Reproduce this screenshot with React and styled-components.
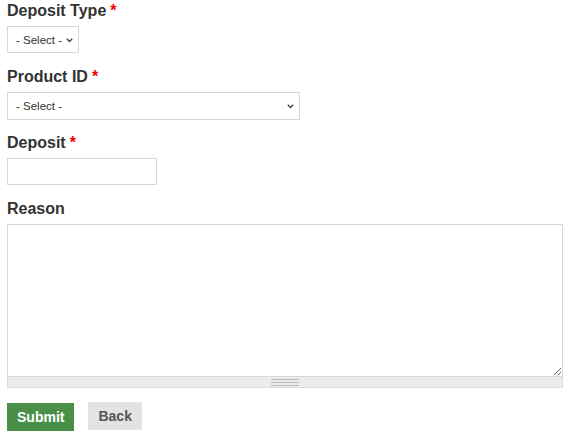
import React from "react";
import styled, { createGlobalStyle } from "styled-components";

const GlobalStyle = createGlobalStyle`
  body {
    margin: 0;
    background: #fff;
    font-family: "Liberation Sans", Arial, sans-serif;
    color: #333;
  }
`;

const Form = styled.form`
  padding: 1px 7px 0;
`;

const Field = styled.div`
  margin-bottom: ${(p) => p.$spacing ?? 14}px;
`;

const Label = styled.label`
  display: block;
  font-size: 16px;
  font-weight: bold;
  line-height: 20px;
  margin-bottom: 5px;
  color: #333;
`;

const Required = styled.span`
  color: #e00;
  margin-left: 4px;
`;

const SelectWrap = styled.div`
  position: relative;
  width: ${(p) => p.$width}px;
`;

const Select = styled.select`
  appearance: none;
  display: block;
  width: 100%;
  height: ${(p) => p.$height}px;
  box-sizing: border-box;
  border: 1px solid #d8d8d8;
  border-radius: 0;
  background: #fff;
  padding: 0 6px 0 8px;
  font-family: "Liberation Sans", Arial, sans-serif;
  font-size: 11.5px;
  color: #333;
  outline: none;
`;

const Chevron = styled.svg`
  position: absolute;
  right: 6px;
  top: 50%;
  margin-top: -2px;
  pointer-events: none;
`;

const TextInput = styled.input`
  display: block;
  width: 150px;
  height: 27px;
  box-sizing: border-box;
  border: 1px solid #d8d8d8;
  border-radius: 0;
  padding: 0 6px;
  font-family: "Liberation Sans", Arial, sans-serif;
  font-size: 13px;
  outline: none;
`;

const TextArea = styled.textarea`
  display: block;
  width: 100%;
  height: 153px;
  box-sizing: border-box;
  border: 1px solid #d8d8d8;
  border-radius: 0;
  margin: 0;
  padding: 6px;
  resize: vertical;
  font-family: "Liberation Sans", Arial, sans-serif;
  font-size: 13px;
  outline: none;
`;

const Grippie = styled.div`
  height: 10px;
  border: 1px solid #dcdcdc;
  border-top: none;
  background: #ececec;
  display: flex;
  justify-content: center;
  align-items: center;
`;

const GripLines = styled.div`
  width: 28px;
  height: 5px;
  border-top: 1px solid #bbb;
  border-bottom: 1px solid #bbb;
  position: relative;
  margin-top: 1px;

  &::after {
    content: "";
    position: absolute;
    left: 0;
    right: 0;
    top: 2px;
    border-top: 1px solid #bbb;
  }
`;

const Actions = styled.div`
  display: flex;
  align-items: flex-start;
  gap: 14px;
  margin-top: 14px;
`;

const Button = styled.button`
  height: 28px;
  padding: 0 10px;
  border: none;
  border-radius: 0;
  font-family: "Liberation Sans", Arial, sans-serif;
  font-size: 14px;
  font-weight: bold;
  cursor: pointer;
  background: ${(p) => (p.$primary ? "#4a8f48" : "#e3e3e3")};
  color: ${(p) => (p.$primary ? "#fff" : "#555")};
  margin-top: ${(p) => (p.$primary ? 1 : 0)}px;
`;

const ChevronIcon = () => (
  <Chevron width="7" height="5" viewBox="0 0 7 5">
    <polyline points="0.8,0.8 3.5,3.6 6.2,0.8" fill="none" stroke="#444" strokeWidth="1.4" />
  </Chevron>
);

const App = () => {
  return (
    <>
      <GlobalStyle />
      <Form onSubmit={(e) => e.preventDefault()}>
        <Field>
          <Label>
            Deposit Type<Required>*</Required>
          </Label>
          <SelectWrap $width={72}>
            <Select $height={27}>
              <option>- Select -</option>
            </Select>
            <ChevronIcon />
          </SelectWrap>
        </Field>
        <Field $spacing={13}>
          <Label>
            Product ID<Required>*</Required>
          </Label>
          <SelectWrap $width={293}>
            <Select $height={28}>
              <option>- Select -</option>
            </Select>
            <ChevronIcon />
          </SelectWrap>
        </Field>
        <Field>
          <Label>
            Deposit<Required>*</Required>
          </Label>
          <TextInput type="text" />
        </Field>
        <Field>
          <Label>Reason</Label>
          <TextArea />
          <Grippie>
            <GripLines />
          </Grippie>
        </Field>
        <Actions>
          <Button $primary type="submit">Submit</Button>
          <Button type="button">Back</Button>
        </Actions>
      </Form>
    </>
  );
};

export default App;
